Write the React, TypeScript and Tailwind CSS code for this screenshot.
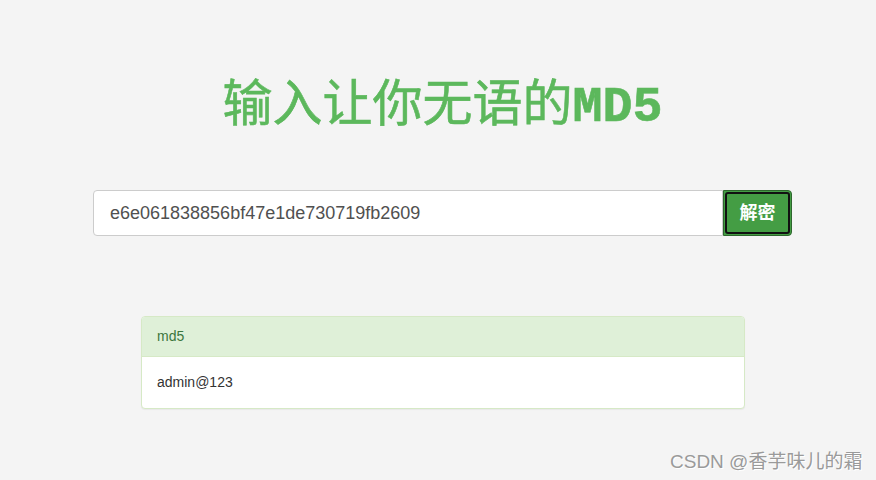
import React from "react";

const App = () => {
  return (
    <div className="relative w-[876px] h-[480px] overflow-hidden bg-[#f4f4f4] font-['Liberation_Sans','Noto_Sans_CJK_SC',sans-serif]">
      <div className="ml-[93px] w-[699px] pt-[84px]">
        {/* title */}
        <h1 className="h-[48px] text-center text-[50px] leading-[48px] font-normal text-[#5cb85c] [-webkit-text-stroke:0.6px_#5cb85c] font-['Liberation_Mono','Noto_Sans_CJK_SC',monospace]">
          输入让你无语的<span className="font-bold">MD5</span>
        </h1>

        {/* search bar */}
        <div className="mt-[58px] flex h-[46px]">
          <div className="flex flex-1 items-center rounded-l-[4px] border border-[#cccccc] bg-white pl-[16px] text-[18px] text-[#505050]">
            e6e061838856bf47e1de730719fb2609
          </div>
          <button className="w-[69px] rounded-r-[4px] border border-[#2d672d] bg-[#449d44] p-[1px]">
            <span className="flex h-full w-full items-center justify-center rounded-[3px] border-2 border-[#111] text-[18px] font-bold text-white">
              解密
            </span>
          </button>
        </div>

        {/* result panel */}
        <div className="ml-[48px] mt-[80px] w-[604px] overflow-hidden rounded-[4px] border border-[#d6e9c6] bg-white shadow-[0_1px_1px_rgba(0,0,0,0.05)]">
          <div className="flex h-[40px] items-center border-b border-[#d6e9c6] bg-[#dff0d8] px-[15px] text-[14px] text-[#3c763d]">
            md5
          </div>
          <div className="flex h-[51px] items-center px-[15px] text-[14px] text-[#333]">
            admin@123
          </div>
        </div>
      </div>

      {/* watermark */}
      <div className="absolute left-[670px] top-[449px] text-[19px] leading-[26px] text-[#9a9a9a] [text-shadow:1px_1px_0_#ffffff]">
        CSDN @香芋味儿的霜
      </div>
    </div>
  );
};

export default App;
